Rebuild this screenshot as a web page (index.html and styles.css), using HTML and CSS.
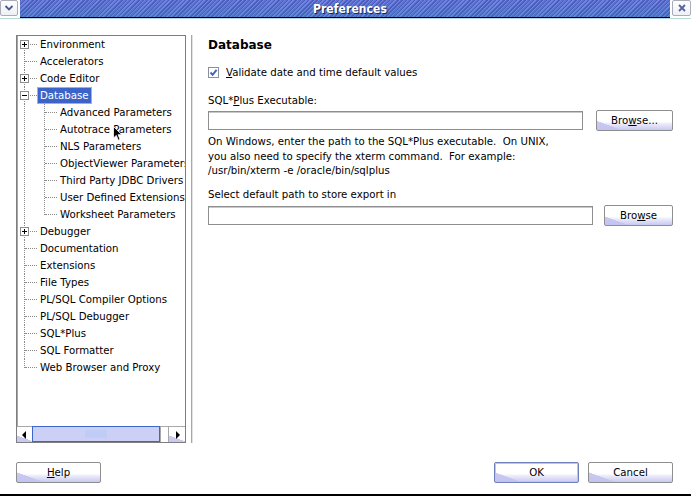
FILE: index.html
```html
<!DOCTYPE html>
<html>
<head>
<meta charset="utf-8">
<title>Preferences</title>
<link rel="stylesheet" href="styles.css">
</head>
<body>
<div class="window">
  <div class="titlebar">
    <div class="tb-btn tb-menu">
      <svg width="10" height="8" viewBox="0 0 10 8"><path d="M1.5 2 L5 5.5 L8.5 2" fill="none" stroke="#4b5c8c" stroke-width="1.8"/></svg>
    </div>
    <div class="tb-title"><span>Preferences</span></div>
    <div class="tb-btn tb-close">
      <svg width="10" height="10" viewBox="0 0 10 10"><path d="M2 2 L8 8 M8 2 L2 8" fill="none" stroke="#56609a" stroke-width="1.8"/></svg>
    </div>
  </div>

  <div class="main">
    <div class="tree">
      <div class="tree-view">
        <div class="row first"><span class="exp plus"></span><span class="label">Environment</span></div>
        <div class="row"><span class="label">Accelerators</span></div>
        <div class="row"><span class="exp plus"></span><span class="label">Code Editor</span></div>
        <div class="row"><span class="exp minus"></span><span class="label selected">Database</span></div>
        <div class="children">
          <div class="row child"><span class="label">Advanced Parameters</span></div>
          <div class="row child"><span class="label">Autotrace Parameters</span></div>
          <div class="row child"><span class="label">NLS Parameters</span></div>
          <div class="row child"><span class="label">ObjectViewer Parameters</span></div>
          <div class="row child"><span class="label">Third Party JDBC Drivers</span></div>
          <div class="row child"><span class="label">User Defined Extensions</span></div>
          <div class="row child"><span class="label">Worksheet Parameters</span></div>
        </div>
        <div class="row"><span class="exp plus"></span><span class="label">Debugger</span></div>
        <div class="row"><span class="label">Documentation</span></div>
        <div class="row"><span class="label">Extensions</span></div>
        <div class="row"><span class="label">File Types</span></div>
        <div class="row"><span class="label">PL/SQL Compiler Options</span></div>
        <div class="row"><span class="label">PL/SQL Debugger</span></div>
        <div class="row"><span class="label">SQL*Plus</span></div>
        <div class="row"><span class="label">SQL Formatter</span></div>
        <div class="row last"><span class="label">Web Browser and Proxy</span></div>
      </div>
      <div class="hscroll">
        <div class="sb-btn">
          <svg width="5" height="8" viewBox="0 0 5 8"><path d="M4 0 L4 8 L0 4 Z" fill="#000"/></svg>
        </div>
        <div class="sb-thumb"><div class="grip"></div></div>
        <div class="sb-track"></div>
        <div class="sb-btn">
          <svg width="5" height="8" viewBox="0 0 5 8"><path d="M1 0 L1 8 L5 4 Z" fill="#000"/></svg>
        </div>
      </div>
    </div>

    <div class="divider"></div>

    <div class="content">
      <div class="heading">Database</div>
      <div class="check-row">
        <svg class="checkbox" width="11" height="11" viewBox="0 0 11 11">
          <rect x="0.5" y="0.5" width="10" height="10" fill="#fff" stroke="#8a8f9a"/>
          <path d="M2.5 5.5 L4.6 7.8 L8.6 2.8" fill="none" stroke="#3a62c8" stroke-width="1.9"/>
        </svg>
        <span><u>V</u>alidate date and time default values</span>
      </div>
      <div class="field-label">SQL*<u>P</u>lus Executable:</div>
      <div class="field-row first-field">
        <div class="textfield"></div>
        <div class="button browse1">Bro<u>w</u>se...</div>
      </div>
      <div class="help">On Windows, enter the path to the SQL*Plus executable.&nbsp; On UNIX,<br>you also need to specify the xterm command.&nbsp; For example:<br>/usr/bin/xterm -e /oracle/bin/sqlplus</div>
      <div class="field-label second-label">Select default path to store export in</div>
      <div class="field-row second-field">
        <div class="textfield"></div>
        <div class="button browse2">Bro<u>w</u>se</div>
      </div>
    </div>
  </div>

  <div class="footer">
    <div class="button footer-btn"><u>H</u>elp</div>
    <div class="footer-right">
      <div class="button footer-btn default">OK</div>
      <div class="button footer-btn">Cancel</div>
    </div>
  </div>
  <div class="bottom-line"></div>

  <svg class="cursor" width="10" height="16" viewBox="0 0 10 16">
    <path d="M0.5 0.5 L0.5 12 L3.3 9.4 L5.3 14.2 L7 13.4 L5.1 8.7 L8.8 8.7 Z" fill="#000" stroke="#fff" stroke-width="0.8"/>
  </svg>
</div>
</body>
</html>
```

FILE: styles.css
```css
* { box-sizing: border-box; }

html, body {
  margin: 0;
  padding: 0;
  background: #fff;
}

body {
  font-family: "DejaVu Sans", "Liberation Sans", sans-serif;
  font-size: 10.2px;
  color: #000;
}

.window {
  position: relative;
  width: 691px;
  height: 497px;
  display: flex;
  flex-direction: column;
  background: #fff;
  overflow: hidden;
}

/* ---------- title bar ---------- */
.titlebar {
  height: 19px;
  display: flex;
  align-items: flex-start;
  border-bottom: 1px solid #b4dada;
}

.tb-btn {
  height: 16px;
  display: flex;
  align-items: center;
  justify-content: center;
  background: linear-gradient(#ffffff, #eef0f6);
  border: 1px solid #a9adb8;
  border-radius: 2px;
}

.tb-menu { width: 18px; margin-right: 2px; }
.tb-close { width: 19px; margin-left: 2px; }

.tb-title {
  flex: 1;
  height: 18px;
  border-bottom: 1px solid #000;
  display: flex;
  align-items: center;
  justify-content: center;
  padding-left: 10px;
  background:
    linear-gradient(to bottom, rgba(140,150,240,0.2), rgba(70,150,200,0.35)),
    repeating-linear-gradient(135deg, #3c4cb0 0 1px, #7080e0 1px 2px, #5565c8 2px 3px);
}

.tb-title span {
  color: #fff;
  font-family: "DejaVu Sans Condensed", "DejaVu Sans", sans-serif;
  font-weight: bold;
  font-size: 12px;
  text-shadow: 1px 1px 0 #1c2450;
  letter-spacing: 0.1px;
}

/* ---------- main ---------- */
.main {
  height: 424px;
  display: flex;
  padding: 16px 18px 0 16px;
}

.tree {
  width: 170px;
  height: 408px;
  display: flex;
  flex-direction: column;
  border: 1px solid #7e7e7e;
  box-shadow: inset 1px 0 0 #a6a6a6;
}

.tree-view {
  flex: 1;
  overflow: hidden;
  white-space: nowrap;
}

.row {
  position: relative;
  height: 17px;
  display: flex;
  align-items: center;
  padding-left: 20px;
}

.row::before {
  content: "";
  position: absolute;
  left: 7px;
  top: 0;
  bottom: 0;
  border-left: 1px dotted #8a8a8a;
}

.row.first::before { top: 8px; }
.row.last::before { bottom: 8px; }

.row::after {
  content: "";
  position: absolute;
  left: 8px;
  width: 12px;
  top: 8px;
  border-top: 1px dotted #8a8a8a;
}

.children {
  position: relative;
}

.children::before {
  content: "";
  position: absolute;
  left: 7px;
  top: 0;
  bottom: 0;
  border-left: 1px dotted #8a8a8a;
}

.children::after {
  content: "";
  position: absolute;
  left: 27px;
  top: 0;
  bottom: 8px;
  border-left: 1px dotted #8a8a8a;
}

.row.child { padding-left: 40px; }
.row.child::before { display: none; }
.row.child::after { left: 28px; width: 12px; }

.label {
  border: 1px solid transparent;
  padding: 0 2px;
  line-height: 15px;
}

.label.selected {
  background: #3c64c8;
  color: #fff;
  border-color: #f0a43a;
}

.exp {
  position: absolute;
  left: 3px;
  top: 4px;
  width: 9px;
  height: 9px;
  border: 1px solid #8c8c8c;
  background: #fff;
  z-index: 1;
}

.exp::before {
  content: "";
  position: absolute;
  left: 1px;
  top: 3px;
  width: 5px;
  height: 1px;
  background: #000;
}

.exp.plus::after {
  content: "";
  position: absolute;
  left: 3px;
  top: 1px;
  width: 1px;
  height: 5px;
  background: #000;
}

/* ---------- horizontal scrollbar ---------- */
.hscroll {
  height: 16px;
  display: flex;
  border-top: 1px solid #a8a8a8;
}

.sb-btn {
  width: 15px;
  display: flex;
  align-items: center;
  justify-content: center;
  background: linear-gradient(200deg, #fff 68%, #c9c9f2 69%);
}

.sb-btn:last-child { width: 16px; }

.sb-thumb {
  width: 128px;
  margin-top: -1px;
  border: 1px solid #3b66cc;
  background: #ccd0f7;
  display: flex;
  align-items: center;
  justify-content: center;
}

.grip {
  width: 22px;
  height: 8px;
  background-color: #e4e8ff;
  background-image: radial-gradient(circle, #3b6ad6 0.55px, transparent 0.75px);
  background-size: 2px 2px;
}

.sb-track {
  width: 9px;
  background: #fff;
  border-left: 1px solid #a8a8a8;
  border-right: 1px solid #a8a8a8;
}

/* ---------- right side ---------- */
.divider {
  width: 2px;
  margin-left: 5px;
  height: 408px;
  background: linear-gradient(to right, #a8a8a8 1px, #e2e2e2 1px);
}

.content {
  flex: 1;
  padding-left: 15px;
  display: flex;
  flex-direction: column;
}

.heading {
  margin-top: 3px;
  font-weight: bold;
  font-size: 12px;
  line-height: 14px;
}

.check-row {
  margin-top: 14px;
  height: 13px;
  display: flex;
  align-items: center;
  line-height: 13px;
}

.checkbox { margin-right: 7px; }

.field-label {
  margin-top: 15px;
  line-height: 13px;
}

.field-row {
  display: flex;
  align-items: center;
  height: 21px;
}

.first-field { margin-top: 3px; gap: 13px; }
.second-field { margin-top: 4px; gap: 11px; }

.textfield {
  flex: 1;
  height: 19px;
  background: #fff;
  border: 1px solid #8e8e8e;
  box-shadow: inset 0 1px 0 #c8c8c8;
}

.help {
  margin-top: 4px;
  line-height: 14.5px;
}

.second-label { margin-top: 9px; }

.button {
  height: 21px;
  display: flex;
  align-items: center;
  justify-content: center;
  border: 1px solid #8e8e8e;
  border-radius: 2px;
  background:
    linear-gradient(200deg, rgba(255,255,255,0) 80%, rgba(195,195,240,0.9) 81%),
    linear-gradient(to bottom, #ffffff 0%, #ffffff 55%, #e6e6fa 72%, #c9c9f1 100%);
  line-height: 13px;
}

.browse1 { width: 77px; }
.browse2 { width: 69px; }

/* ---------- footer ---------- */
.footer {
  display: flex;
  justify-content: space-between;
  padding: 19px 18px 0 16px;
  height: 51px;
}

.footer-right {
  display: flex;
  gap: 9px;
}

.footer-btn { width: 85px; }

.button.default {
  border-color: #7080b8;
  box-shadow: inset 0 0 0 1px #b4c8f0;
}

.bottom-line {
  height: 2px;
  background: #000;
}

.cursor {
  position: absolute;
  left: 113px;
  top: 126px;
}
```
